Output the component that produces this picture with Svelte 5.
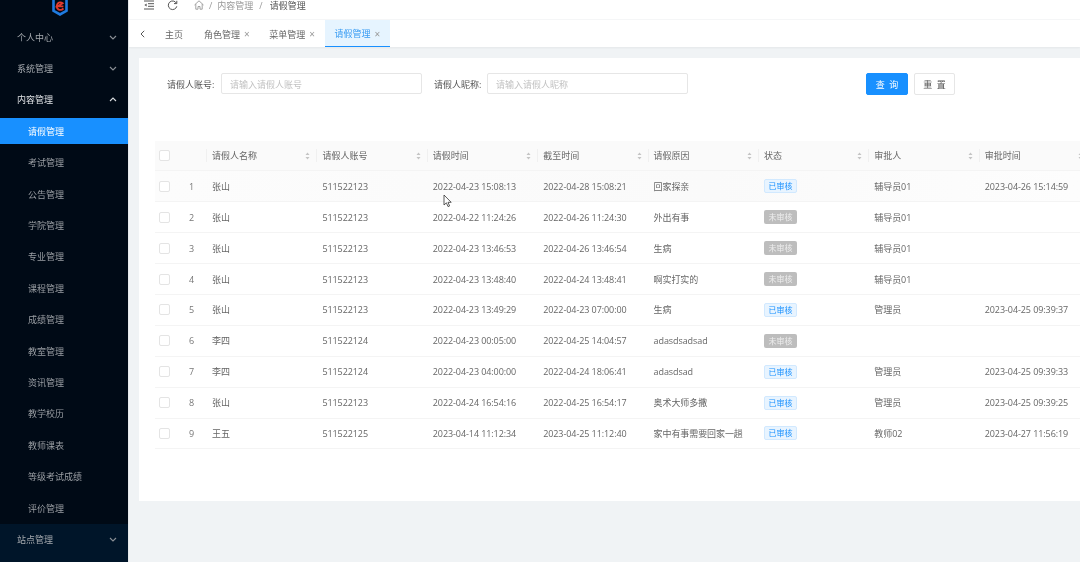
<script>
  const menu = [
    { t: '个人中心', lvl: 1, arrow: 'down' },
    { t: '系统管理', lvl: 1, arrow: 'down' },
    { t: '内容管理', lvl: 1, arrow: 'up', open: true },
    { t: '请假管理', lvl: 2, active: true },
    { t: '考试管理', lvl: 2 },
    { t: '公告管理', lvl: 2 },
    { t: '学院管理', lvl: 2 },
    { t: '专业管理', lvl: 2 },
    { t: '课程管理', lvl: 2 },
    { t: '成绩管理', lvl: 2 },
    { t: '教室管理', lvl: 2 },
    { t: '资讯管理', lvl: 2 },
    { t: '教学校历', lvl: 2 },
    { t: '教师课表', lvl: 2 },
    { t: '等级考试成绩', lvl: 2 },
    { t: '评价管理', lvl: 2 },
    { t: '站点管理', lvl: 1, arrow: 'down', site: true }
  ];
  const heads = ['请假人名称', '请假人账号', '请假时间', '截至时间', '请假原因', '状态', '审批人', '审批时间'];
  const rows = [
    ['张山', '511522123', '2022-04-23 15:08:13', '2022-04-28 15:08:21', '回家探亲', 1, '辅导员01', '2023-04-26 15:14:59'],
    ['张山', '511522123', '2022-04-22 11:24:26', '2022-04-26 11:24:30', '外出有事', 0, '辅导员01', ''],
    ['张山', '511522123', '2022-04-23 13:46:53', '2022-04-26 13:46:54', '生病', 0, '辅导员01', ''],
    ['张山', '511522123', '2022-04-23 13:48:40', '2022-04-24 13:48:41', '啊实打实的', 0, '辅导员01', ''],
    ['张山', '511522123', '2022-04-23 13:49:29', '2022-04-23 07:00:00', '生病', 1, '管理员', '2023-04-25 09:39:37'],
    ['李四', '511522124', '2022-04-23 00:05:00', '2022-04-25 14:04:57', 'adasdsadsad', 0, '', ''],
    ['李四', '511522124', '2022-04-23 04:00:00', '2022-04-24 18:06:41', 'adasdsad', 1, '管理员', '2023-04-25 09:39:33'],
    ['张山', '511522123', '2022-04-24 16:54:16', '2022-04-25 16:54:17', '奥术大师多撒', 1, '管理员', '2023-04-25 09:39:25'],
    ['王五', '511522125', '2023-04-14 11:12:34', '2023-04-25 11:12:40', '家中有事需要回家一趟', 1, '教师02', '2023-04-27 11:56:19']
  ];
</script>

<div class="app">
  <aside class="side">
    <div class="logo">
      <svg width="16" height="16" viewBox="0 0 16 16">
        <path d="M1.5 -4 V10.8 L8 14.5 L14.5 10.8 V-4" fill="none" stroke="#1f7be0" stroke-width="2.6" />
        <path d="M11.4 8.4 A3.7 3.7 0 1 1 10.6 3.2 L5.6 6.4 H11.4" fill="none" stroke="#e23b2e" stroke-width="1.9" />
      </svg>
    </div>
    {#each menu as m}
      <div class="item" class:sub={m.lvl === 2} class:open={m.open} class:active={m.active} class:site={m.site}>
        <span>{m.t}</span>
        {#if m.arrow}
          <svg class="arrow" width="8" height="5" viewBox="0 0 8 5">
            <path d={m.arrow === 'down' ? 'M1 1 L4 4 L7 1' : 'M1 4 L4 1 L7 4'} fill="none" stroke="currentColor" stroke-width="1.1" />
          </svg>
        {/if}
      </div>
    {/each}
  </aside>

  <main class="main">
    <header class="top">
      <svg class="ic1" width="10" height="10" viewBox="0 0 10 10">
        <path d="M0 1 H10 M4 3.7 H10 M4 6.3 H10 M0 9 H10" stroke="#555" stroke-width="1" />
        <path d="M2.6 3.4 L0.4 5 L2.6 6.6 Z" fill="#555" />
      </svg>
      <svg class="ic2" width="11" height="11" viewBox="0 0 11 11">
        <path d="M9.4 3.2 A4.3 4.3 0 1 0 9.8 6.3" fill="none" stroke="#555" stroke-width="1" />
        <path d="M9.8 0.8 V3.6 H7" fill="none" stroke="#555" stroke-width="1" />
      </svg>
      <svg class="home" width="10" height="10" viewBox="0 0 10 10">
        <path d="M0.5 5 L5 0.8 L9.5 5 M1.8 4 V9.2 H4 V6.5 H6 V9.2 H8.2 V4" fill="none" stroke="#999" stroke-width="0.9" />
      </svg>
      <span class="crumb">/</span>
      <span class="crumb">内容管理</span>
      <span class="crumb sep">/</span>
      <span class="crumb cur">请假管理</span>
    </header>

    <nav class="tabs">
      <svg class="back" width="5" height="8" viewBox="0 0 5 8"><path d="M4.2 0.8 L1 4 L4.2 7.2" fill="none" stroke="#555" stroke-width="1" /></svg>
      <div class="tab home-tab">主页</div>
      <div class="tab">角色管理<i>×</i></div>
      <div class="tab">菜单管理<i>×</i></div>
      <div class="tab on">请假管理<i>×</i></div>
    </nav>

    <section class="card">
      <form class="search">
        <label class="lab first" for="a">请假人账号:</label>
        <input id="a" class="inp" placeholder="请输入请假人账号" />
        <label class="lab second" for="b">请假人昵称:</label>
        <input id="b" class="inp" placeholder="请输入请假人昵称" />
        <button type="button" class="btn primary">查 询</button>
        <button type="button" class="btn">重 置</button>
      </form>

      <div class="table">
        <div class="row head">
          <div class="chk-cell"><span class="chk"></span></div>
          {#each heads as h}
            <div class="cell">
              <span>{h}</span>
              <svg class="sort" width="5" height="8" viewBox="0 0 5 8"><path d="M2.5 0.5 L4.5 3 H0.5 Z M2.5 7.5 L0.5 5 H4.5 Z" fill="#c4c4c4" /></svg>
            </div>
          {/each}
        </div>
        {#each rows as r, i}
          <div class="row body" class:hover={i === 0}>
            <div class="chk-cell"><span class="chk"></span><span class="idx">{i + 1}</span></div>
            {#each r as c, j}
              <div class="cell">
                {#if j === 5}
                  <span class="tag" class:ok={c === 1}>{c === 1 ? '已审核' : '未审核'}</span>
                {:else}
                  <span>{c}</span>
                {/if}
              </div>
            {/each}
          </div>
        {/each}
      </div>
    </section>
  </main>

  <svg class="cursor" width="10" height="14" viewBox="0 0 10 14">
    <path d="M1 1 V11 L3.4 8.8 L5 12.6 L6.6 12 L5 8.3 H8.2 Z" fill="#fff" stroke="#333" stroke-width="0.8" />
  </svg>
</div>

<style>
  :global(body) { margin: 0; overflow: hidden; }
  .app {
    display: flex;
    width: 1080px;
    height: 562px;
    overflow: hidden;
    position: relative;
    background: #f0f3f5;
    font-family: "Open Sans", "Noto Sans CJK SC", sans-serif;
    font-size: 9px;
    color: #666;
    filter: blur(0.45px);
  }
  .side {
    width: 128px;
    flex: none;
    background: #000a16;
    display: flex;
    flex-direction: column;
    border-right: 1px solid #e6e9eb;
    box-sizing: content-box;
  }
  .logo { height: 21.5px; flex: none; padding-left: 52px; box-sizing: border-box; }
  .logo svg { display: block; }
  .item {
    height: 31.4px;
    flex: none;
    display: flex;
    align-items: center;
    justify-content: space-between;
    padding: 0 11px 0 17px;
    color: #a4a9ae;
    box-sizing: border-box;
  }
  .item.sub { padding-left: 28px; color: #9a9fa4; }
  .item.open { color: #dfe2e5; }
  .item.active { background: #1890ff; color: #fff; height: 26px; margin: 2.7px 0; }
  .item.site { background: #001529; height: 39px; padding-bottom: 8px; margin-top: 0.5px; }
  .arrow { color: #8b9096; }
  .item.open .arrow { color: #d8dbde; }

  .main { flex: 1; min-width: 0; display: flex; flex-direction: column; }
  .top {
    height: 20px;
    background: #fff;
    border-bottom: 1px solid #f5f6f7;
    display: flex;
    align-items: center;
    gap: 5px;
    padding: 0 0 9px 15px;
    box-sizing: border-box;
    color: #999;
  }
  .ic1 { margin-right: 8px; flex: none; }
  .ic2 { margin-right: 11px; flex: none; }
  .sep { margin-left: 1px; }
  .cur { margin-left: 2px; color: #555; }

  .tabs {
    height: 27px;
    background: #fff;
    display: flex;
    align-items: stretch;
    padding-left: 11px;
    box-shadow: 0 1px 2px rgba(0, 0, 0, .05);
    color: #666;
  }
  .back { align-self: center; margin-right: 10px; flex: none; }
  .tab {
    display: flex;
    align-items: center;
    padding: 1px 10px 0;
    width: 65.3px;
    flex: none;
    gap: 4px;
    box-sizing: border-box;
    white-space: nowrap;
  }
  .home-tab { width: 39px; padding: 1px 0 0 10px; }
  .tab i { font-style: normal; color: #999; font-size: 10px; width: 5px; text-align: center; flex: none; }
  .tab.on { background: #e6f4ff; color: #3a9cf3; border-bottom: 1px solid #1890ff; }

  .card {
    margin: 11px 0 0 10px;
    height: 443px;
    background: #fff;
    padding: 15px 0 0 16px;
    box-sizing: border-box;
  }
  .search { display: flex; align-items: flex-start; height: 22px; line-height: 23px; }
  .lab { color: #555; white-space: nowrap; padding-left: 12px; }
  .lab.first { width: 54px; }
  .lab.second { width: 53px; }
  .inp {
    width: 201px;
    height: 21px;
    box-sizing: border-box;
    border: 1px solid #e6e6e6;
    border-radius: 2px;
    padding: 1px 8px 0;
    font: inherit;
    outline: none;
    background: #fff;
  }
  .inp::placeholder { color: #c2c2c2; }
  .btn {
    width: 41px;
    height: 22px;
    box-sizing: border-box;
    border: 1px solid #e6e6e6;
    border-radius: 2px;
    background: #fff;
    color: #555;
    font: inherit;
    line-height: 1;
    word-spacing: 2px;
    padding: 0;
    margin-left: 6px;
  }
  .btn.primary { background: #1890ff; border-color: #1890ff; color: #fff; width: 42px; margin-left: 178px; }

  .table { margin-top: 46px; }
  .row {
    display: grid;
    grid-template-columns: 51px repeat(8, 110.4px);
    height: 30.9px;
    border-bottom: 1px solid #f4f4f4;
    box-sizing: border-box;
    align-items: center;
  }
  .row.head { background: #fafafa; height: 30.4px; color: #666; }
  .row.hover { background: linear-gradient(90deg, #fcfcfc, #fafafa 60%, #fdfdfd); }
  .chk-cell { display: flex; align-items: center; padding-left: 4px; }
  .chk {
    width: 9px;
    height: 9px;
    border: 1px solid #e4e4e4;
    border-radius: 2px;
    background: #fff;
    flex: none;
  }
  .idx { width: 30px; margin-left: 7px; text-align: center; color: #777; }
  .cell {
    padding-left: 6px;
    padding-right: 6px;
    display: flex;
    align-items: center;
    justify-content: space-between;
    white-space: nowrap;
    min-width: 0;
    height: 100%;
    box-sizing: border-box;
  }
  .body .cell { letter-spacing: -0.08px; }
  .head .cell { position: relative; }
  .head .cell::before {
    content: "";
    position: absolute;
    left: 0;
    top: 8px;
    bottom: 8px;
    width: 1px;
    background: #f0f0f0;
  }
  .sort { flex: none; margin-right: 0; }
  .tag {
    height: 14px;
    width: 33px;
    box-sizing: border-box;
    border-radius: 2px;
    text-align: center;
    font-size: 8px;
    line-height: 13px;
    background: #bdbdbd;
    color: #eee;
  }
  .tag.ok { background: #e8f4ff; border: 1px solid #d1e9ff; color: #1890ff; line-height: 12px; }
  .cursor { position: absolute; left: 443px; top: 194px; }
</style>
